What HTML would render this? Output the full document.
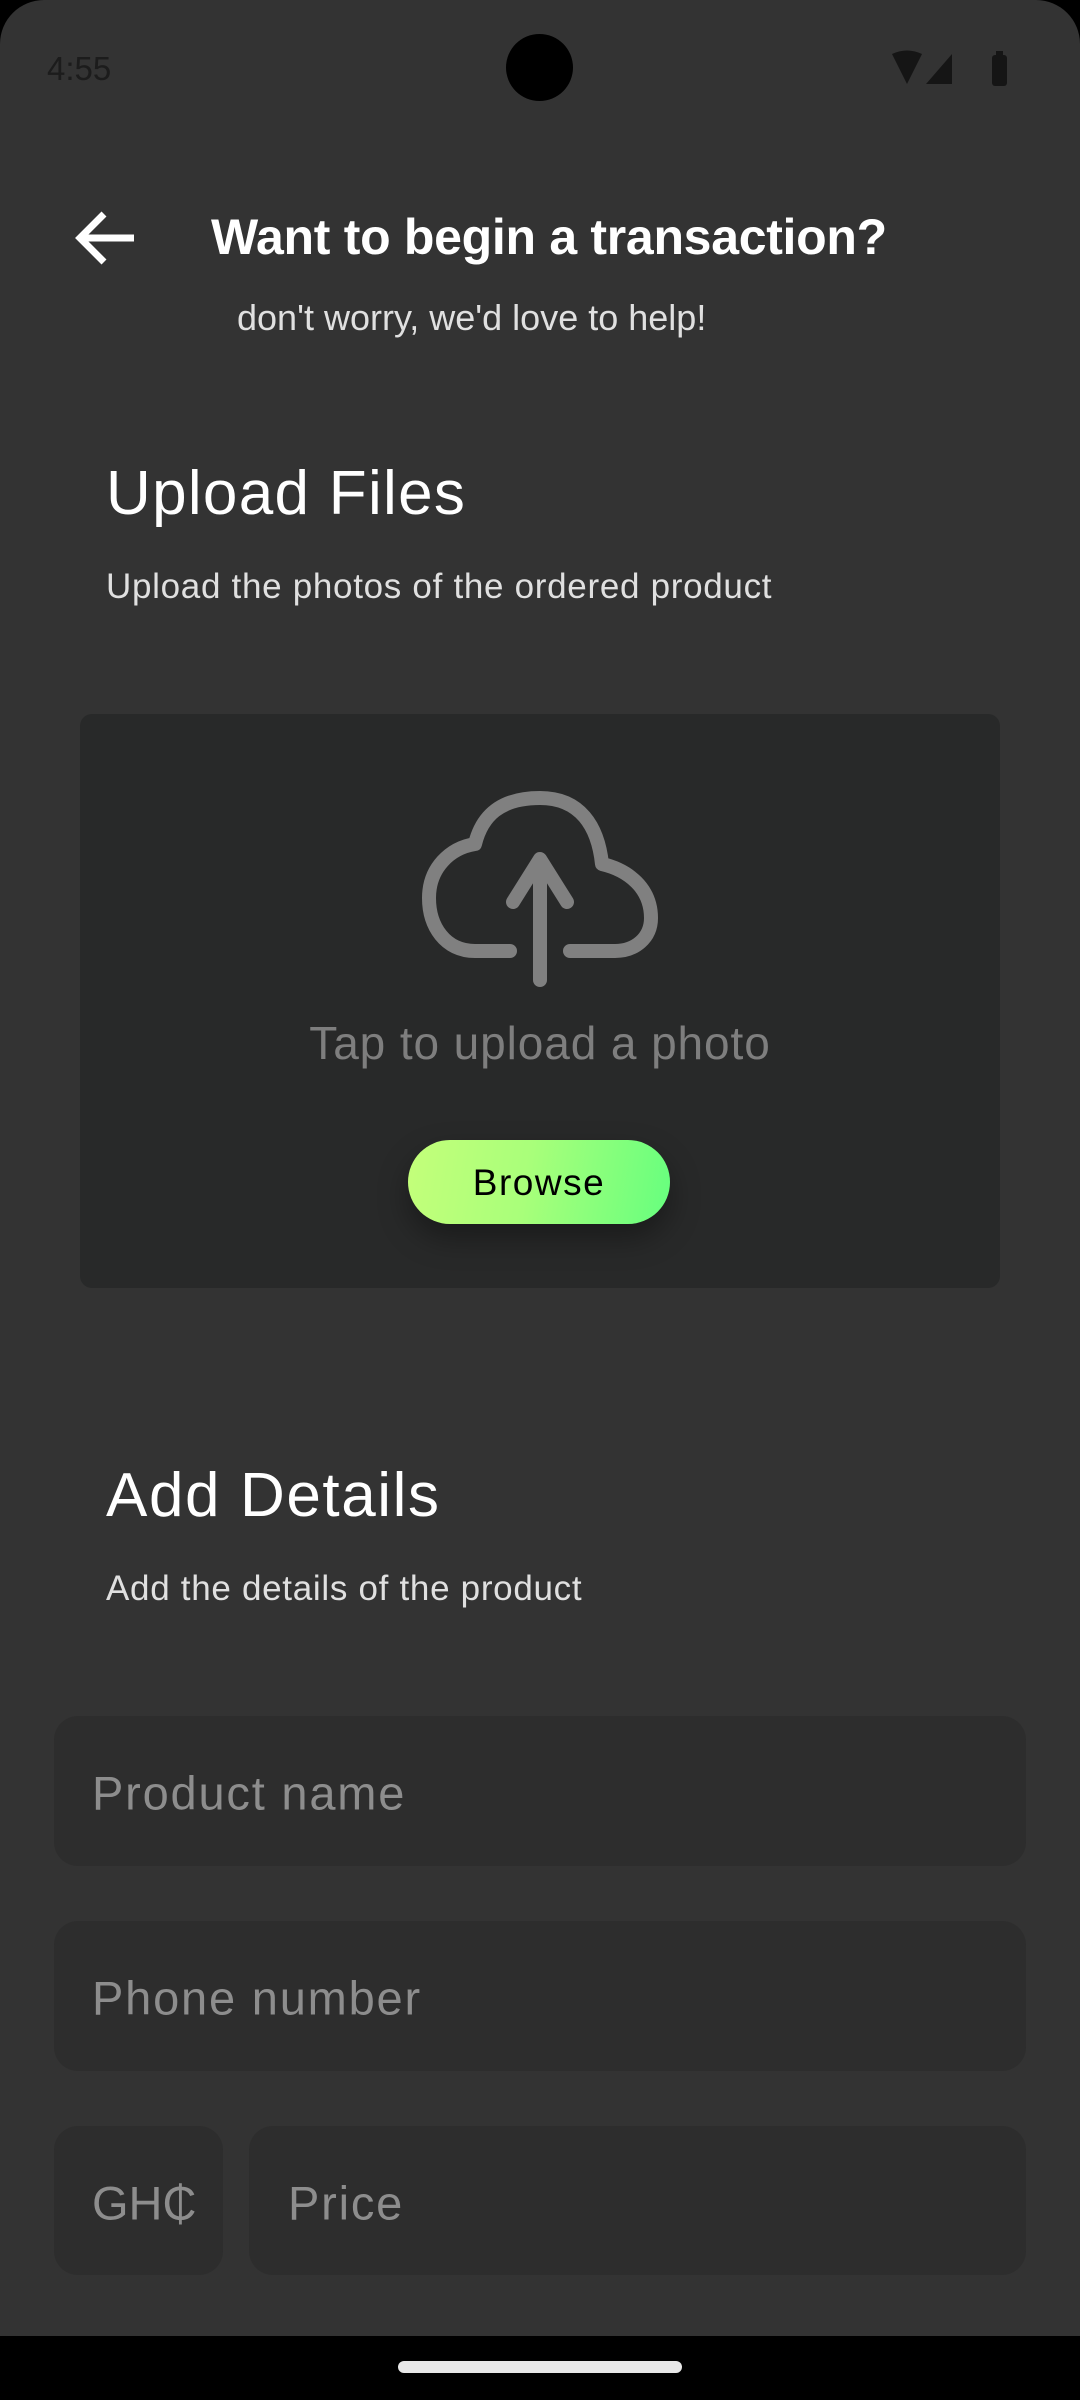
<!DOCTYPE html>
<html><head><meta charset="utf-8"><style>
*{margin:0;padding:0;box-sizing:border-box}
body{width:1080px;height:2400px;background:#000;font-family:"Liberation Sans",sans-serif;position:relative;overflow:hidden}
.screen{position:absolute;left:0;top:0;width:1080px;height:2336px;background:#333333;border-radius:44px 44px 0 0}
.a{position:absolute;white-space:nowrap}
.card{position:absolute;left:80px;top:714px;width:920px;height:574px;background:#282929;border-radius:12px}
.inp{position:absolute;background:#2d2d2d;border-radius:24px}
.ph{position:absolute;color:#8d8d8d;font-size:47px;letter-spacing:1.8px;top:50%;transform:translateY(-46%)}
</style></head><body>
<div class="screen">
<div class="a" style="left:47px;top:50px;font-size:33px;color:#1c1c1c">4:55</div>
<div class="a" style="left:506px;top:34px;width:67px;height:67px;border-radius:50%;background:#000"></div>
<svg class="a" style="left:890px;top:50px" width="130" height="40" viewBox="0 0 130 40">
<path d="M2 4 Q17 -3 32 4 L17 34 Z" fill="#151515"/>
<path d="M62 4 V34 H36 Z" fill="#151515"/>
<rect x="102" y="5" width="15" height="31" rx="3" fill="#151515"/><rect x="106" y="1" width="7" height="5" fill="#151515"/>
</svg>
<svg class="a" style="left:72px;top:208px" width="68" height="60" viewBox="0 0 68 60">
<path d="M62 30 H10 M32 6 L8 30 L32 54" stroke="#fff" stroke-width="7" fill="none"/>
</svg>
<div class="a" style="left:211px;top:208px;font-size:50px;font-weight:bold;color:#fff;letter-spacing:-0.3px">Want to begin a transaction?</div>
<div class="a" style="left:237px;top:297px;font-size:36px;color:#e0e0e0">don't worry, we'd love to help!</div>
<div class="a" style="left:106px;top:458px;font-size:62px;color:#fff;letter-spacing:1.3px">Upload Files</div>
<div class="a" style="left:106px;top:567px;font-size:35px;color:#e0e0e0;letter-spacing:0.7px">Upload the photos of the ordered product</div>
<div class="card"></div>
<svg class="a" style="left:400px;top:776px" width="280" height="230" viewBox="0 0 280 230">
<path d="M110 175 H75 C45 175 29 150 29 122 C29 92 50 72 75 68 C82 40 100 22 140 22 C180 22 198 50 202 88 C228 94 251 112 251 142 C251 162 235 175 215 175 H170" stroke="#808080" stroke-width="14" fill="none" stroke-linecap="round" stroke-linejoin="round"/>
<path d="M140 204 V88 M113 126 L140 83 L167 126" stroke="#808080" stroke-width="14" fill="none" stroke-linecap="round" stroke-linejoin="round"/>
</svg>
<div class="a" style="left:0;width:1080px;text-align:center;top:1016px;font-size:46px;color:#7e7e7e;letter-spacing:0.9px">Tap to upload a photo</div>
<div class="a" style="left:408px;top:1140px;width:262px;height:84px;border-radius:42px;background:linear-gradient(100deg,#c4ff7a,#a9ff7a 45%,#66ff7e);box-shadow:0 14px 30px rgba(0,0,0,0.35);text-align:center;line-height:86px;font-size:37px;letter-spacing:1.5px;color:#000">Browse</div>
<div class="a" style="left:106px;top:1460px;font-size:62px;color:#fff;letter-spacing:1.6px">Add Details</div>
<div class="a" style="left:106px;top:1569px;font-size:35px;color:#e0e0e0;letter-spacing:0.7px">Add the details of the product</div>
<div class="inp" style="left:54px;top:1716px;width:972px;height:150px"><span class="ph" style="left:38px">Product name</span></div>
<div class="inp" style="left:54px;top:1921px;width:972px;height:150px"><span class="ph" style="left:38px">Phone number</span></div>
<div class="inp" style="left:54px;top:2126px;width:169px;height:149px"><span class="ph" style="left:38px;letter-spacing:0">GH₵</span></div>
<div class="inp" style="left:249px;top:2126px;width:777px;height:149px"><span class="ph" style="left:39px">Price</span></div>
</div>
<div class="a" style="left:398px;top:2361px;width:284px;height:12px;border-radius:6px;background:#e8e8e8"></div>
</body></html>
